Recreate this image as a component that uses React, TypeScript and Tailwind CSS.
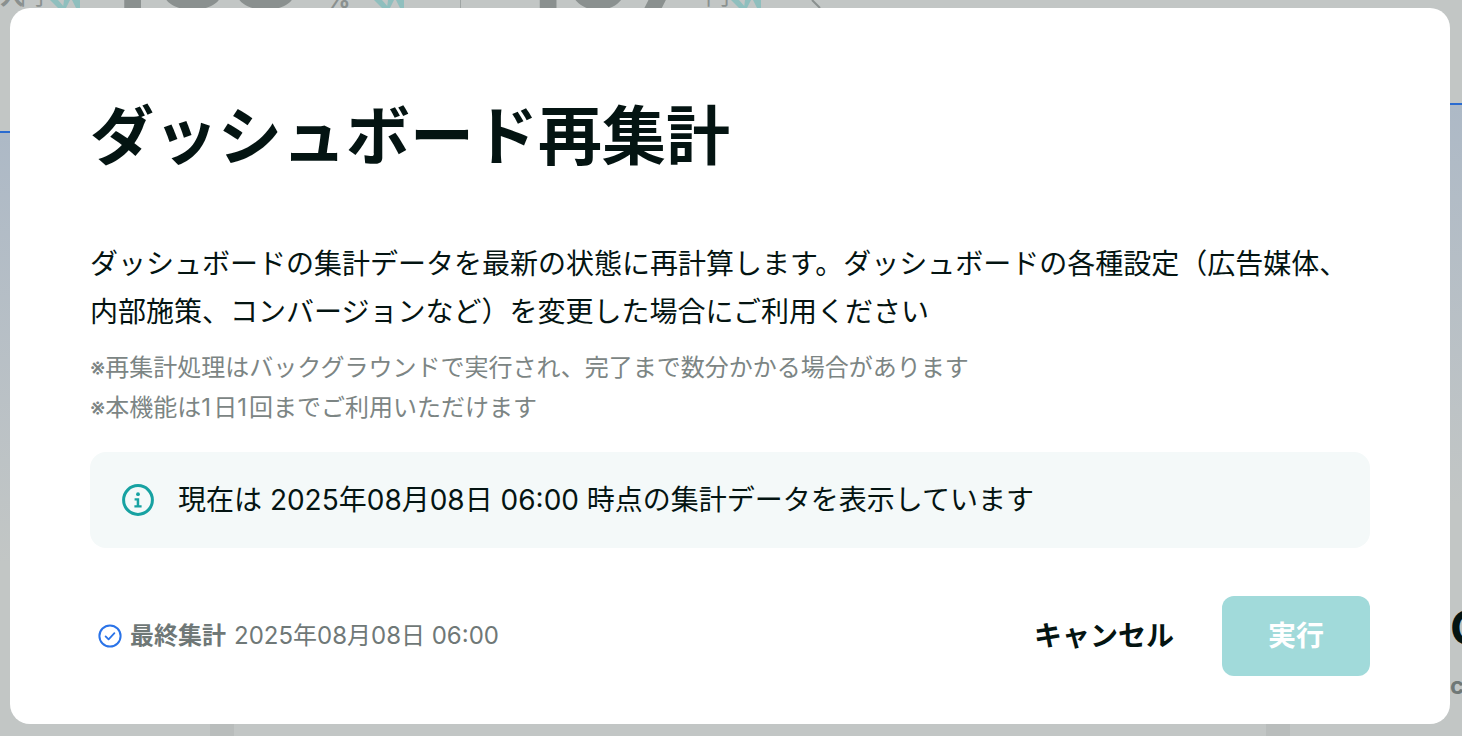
const sans = "font-['Inter','Noto_Sans_CJK_JP',sans-serif]";

function InfoIcon() {
  return (
    <svg width="32" height="32" viewBox="0 0 32 32" fill="none" className="shrink-0">
      <circle cx="16" cy="16" r="14.4" stroke="#17a2a2" strokeWidth="3" />
      <circle cx="16" cy="10.2" r="1.9" fill="#17a2a2" />
      <path d="M12.6 14.2h4.6v7h2.4v2.3h-7.2v-2.3h2.3v-4.7h-2.1z" fill="#17a2a2" />
    </svg>
  );
}

function CheckIcon() {
  return (
    <svg width="24" height="24" viewBox="0 0 24 24" fill="none" className="shrink-0">
      <circle cx="12" cy="12" r="10.6" stroke="#2a73e8" strokeWidth="2" />
      <path d="M7.6 12.4l3 3 5.8-6.2" stroke="#2a73e8" strokeWidth="1.8" strokeLinecap="round" strokeLinejoin="round" />
    </svg>
  );
}

function TealMark({ className }: { className: string }) {
  return (
    <svg width="30" height="8" viewBox="0 0 30 8" className={`shrink-0 ${className}`}>
      <path d="M0 0h8l7 8H8zM14 0h6l-4 8h-3zM22 0h8v8h-4z" fill="#8fbfbe" />
    </svg>
  );
}

// dimmed page that shows around the modal
function TopStrip() {
  return (
    <div className="flex h-2 shrink-0 items-end overflow-hidden font-bold text-[#8a908f]">
      <span className="w-5 text-[24px] leading-none">入</span>
      <span className="w-[30px] text-[24px] leading-none font-normal">円</span>
      <TealMark className="" />
      <span className="ml-5 -mb-4 text-[112px] leading-none">1</span>
      <span className="-mb-4 ml-2 text-[112px] leading-none">88</span>
      <span className="-mb-1 ml-6 text-[24px] leading-none">%</span>
      <TealMark className="ml-6" />
      <div className="ml-14 h-2 w-px bg-[#9fa5a4]" />
      <span className="ml-[54px] -mb-4 text-[112px] leading-none">1</span>
      <span className="-mb-4 text-[112px] leading-none">97</span>
      <span className="ml-1.5 w-[26px] text-[24px] leading-none font-normal">円</span>
      <TealMark className="" />
      <svg width="12" height="8" viewBox="0 0 12 8" className="ml-[50px] shrink-0">
        <path d="M1 0l8 8" stroke="#8a908f" strokeWidth="2" />
      </svg>
    </div>
  );
}

function SideColumn({ top, tint, className }: { top: string; tint: string; className: string }) {
  return (
    <div className={`flex shrink-0 flex-col overflow-hidden ${className}`}>
      <div className={top} />
      <div className="h-0.5 bg-[#2a6bd0]" />
      <div className={`bg-gradient-to-b from-[#adb9c6] to-[#c2c6c5] ${tint}`} />
    </div>
  );
}

export default function App() {
  return (
    <main className={`relative flex h-[736px] w-[1462px] flex-col overflow-hidden bg-[#c2c6c5] ${sans}`}>
      <TopStrip />
      <div className="flex h-[716px] justify-between">
        <SideColumn className="w-2.5" top="h-[123px]" tint="h-[430px]" />
        <div className="flex w-3 shrink-0 flex-col overflow-hidden">
          <SideColumn className="" top="h-[95px]" tint="h-[400px]" />
          <span className="mt-[99px] ml-0 text-[48px] leading-[48px] font-bold text-[#041412]">C</span>
          <span className="mt-[22px] text-[24px] leading-6 font-bold text-[#6f7877]">c</span>
        </div>
      </div>
      <div className="flex h-3 shrink-0">
        <div className="ml-[210px] w-6 bg-[#b9bdbc]" />
        <div className="ml-[1032px] w-6 bg-[#b9bdbc]" />
      </div>

      <div className="absolute top-2 left-2.5 flex h-[716px] w-[1440px] flex-col rounded-[20px] bg-white px-20 pt-[90px]">
        <h1 className="text-[64px] leading-[76px] font-bold text-[#041412]">ダッシュボード再集計</h1>

        <p className="mt-[66px] w-[1280px] text-[28px] leading-[48px] text-[#041412]">
          ダッシュボードの集計データを最新の状態に再計算します。ダッシュボードの各種設定（広告媒体、内部施策、コンバージョンなど）を変更した場合にご利用ください
        </p>

        <div className="mt-3 text-[24px] leading-10 text-[#7c8584]">
          <p>※再集計処理はバックグラウンドで実行され、完了まで数分かかる場合があります</p>
          <p>
            ※本機能は<span className="tracking-[2px]">1</span>日<span className="tracking-[2px]">1</span>回までご利用いただけます
          </p>
        </div>

        <div className="mt-6 flex h-24 items-center gap-6 rounded-2xl bg-[#f4f9f9] px-8">
          <InfoIcon />
          <span className="text-[28px] text-[#041412]">現在は 2025年08月08日 06:00 時点の集計データを表示しています</span>
        </div>

        <div className="mt-12 flex items-center justify-between">
          <div className="flex items-center gap-2 pl-2 text-[24px] text-[#6f7877]">
            <CheckIcon />
            <span className="font-bold">最終集計</span>
            <span>2025年08月08日 06:00</span>
          </div>
          <div className="flex items-center gap-12">
            <button className="text-[28px] font-bold text-[#041412]">キャンセル</button>
            <button className="h-20 w-[148px] rounded-xl bg-[#a1dada] text-[28px] font-bold text-white">実行</button>
          </div>
        </div>
      </div>
    </main>
  );
}
